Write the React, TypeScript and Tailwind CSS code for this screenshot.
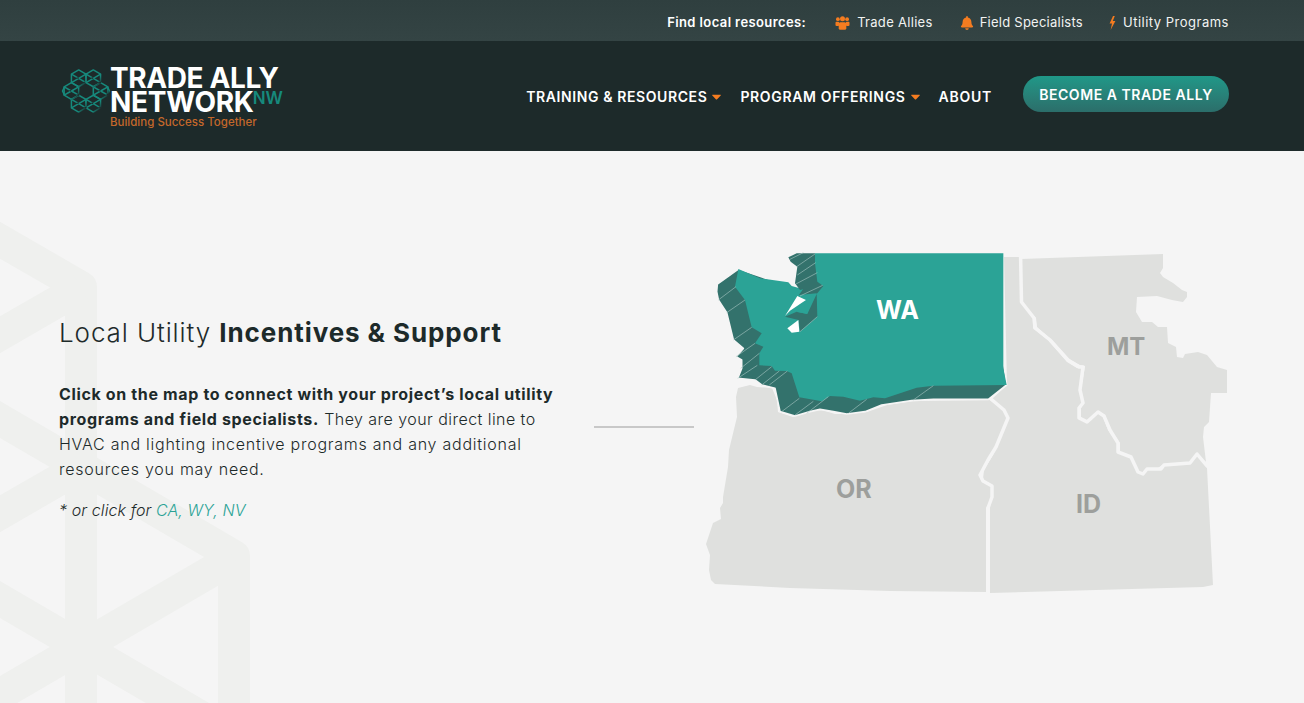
import React from 'react';
import { FaBell, FaCaretDown } from 'react-icons/fa';

const hexPoints = (cx: number, cy: number, r: number) =>
  [30, 90, 150, 210, 270, 330].map((a) => [
    cx + r * Math.cos((a * Math.PI) / 180),
    cy + r * Math.sin((a * Math.PI) / 180),
  ]);

function LogoMark() {
  const cells = [0, 60, 120, 180, 240, 300].map((a) => [
    24 + 14.6 * Math.cos((a * Math.PI) / 180),
    24 + 14.6 * Math.sin((a * Math.PI) / 180),
  ]);
  return (
    <svg width="50" height="48" viewBox="0 0 48 48" className="shrink-0">
      <defs>
        <linearGradient id="logoFade" x1="0.3" y1="0.2" x2="1" y2="0.85">
          <stop offset="0" stopColor="#16897c" />
          <stop offset="0.65" stopColor="#16897c" />
          <stop offset="1" stopColor="#1d2a2a" />
        </linearGradient>
      </defs>
      <g fill="none" stroke="url(#logoFade)" strokeWidth="1.5" strokeLinejoin="round">
        {cells.map(([cx, cy], i) => {
          const pts = hexPoints(cx, cy, 8.4);
          return (
            <g key={i}>
              <polygon points={pts.map((p) => p.join(',')).join(' ')} />
              {pts.map((p, j) => (
                <line key={j} x1={cx} y1={cy} x2={p[0]} y2={p[1]} />
              ))}
            </g>
          );
        })}
        <path d="M2.5 19.8 L0.5 24 L2.5 28.2 M45.5 19.8 L47.5 24 L45.5 28.2" />
      </g>
    </svg>
  );
}

function Logo() {
  return (
    <div className="flex items-start">
      <div className="mt-[1px] -mr-[1px]">
        <LogoMark />
      </div>
      <div className="flex flex-col">
        <div className="text-[28px] leading-[24px] font-bold tracking-[-0.4px] text-white whitespace-nowrap">TRADE ALLY</div>
        <div className="flex items-start">
          <span className="text-[28px] leading-[24px] font-bold tracking-[-0.25px] text-white">NETWORK</span>
          <span className="text-[17px] leading-[14px] font-semibold text-[#16897c] mt-[1px] -ml-[1px] tracking-[-0.2px]">NW</span>
        </div>
        <div className="text-[11.5px] leading-[14px] mt-[1px] font-medium text-[#c4682a] whitespace-nowrap">Building Success Together</div>
      </div>
    </div>
  );
}

function UsersIcon() {
  return (
    <svg width="15" height="14" viewBox="0 0 14 14" fill="#f57c20" className="mr-[7px] shrink-0">
      <circle cx="2.4" cy="3.2" r="1.9" />
      <circle cx="11.6" cy="3.2" r="1.9" />
      <circle cx="7" cy="2.8" r="2.5" />
      <rect x="0" y="5.8" width="3.6" height="4.2" rx="1" />
      <rect x="10.4" y="5.8" width="3.6" height="4.2" rx="1" />
      <rect x="3.2" y="6.2" width="7.6" height="7.6" rx="1.6" />
    </svg>
  );
}

function BoltIcon() {
  return (
    <svg width="7" height="14" viewBox="0 0 7 14" fill="#f57c20" className="mr-[7px] shrink-0">
      <polygon points="4,0 0.6,7.6 3,7.6 1.6,14 6.4,5 3.8,5 5.8,0" />
    </svg>
  );
}

function TopBar() {
  return (
    <div className="h-[41px] pt-[4px] bg-gradient-to-b from-[#2f3f3f] to-[#344444] flex items-center justify-end pr-[75px] text-[13px] text-[#f1f3f2]">
      <span className="font-semibold text-white tracking-[0.4px] mr-[29px]">Find local resources:</span>
      <UsersIcon />
      <span className="tracking-[0.3px] mr-[27px]">Trade Allies</span>
      <FaBell className="text-[#f57c20] text-[14px] mr-[6px]" />
      <span className="tracking-[0.25px] mr-[26px]">Field Specialists</span>
      <BoltIcon />
      <span className="tracking-[0.5px]">Utility Programs</span>
    </div>
  );
}

function NavBar() {
  return (
    <nav className="h-[110px] bg-[#1d2a2a] flex items-start justify-between pl-[61px] pr-[75px]">
      <div className="pt-[25px]">
        <Logo />
      </div>
      <div className="flex items-center pt-[35px] text-[14px] font-semibold text-white">
        <span className="tracking-[0.6px] mt-[4px]">TRAINING &amp; RESOURCES</span>
        <FaCaretDown className="text-[#f57c20] text-[15px] mt-[4px] ml-[2px] mr-[16px]" />
        <span className="tracking-[0.65px] mt-[4px]">PROGRAM OFFERINGS</span>
        <FaCaretDown className="text-[#f57c20] text-[15px] mt-[4px] ml-[2px] mr-[16px]" />
        <span className="tracking-[0.75px] mt-[4px]">ABOUT</span>
        <button className="ml-[31px] h-[36px] w-[206px] rounded-[18px] bg-gradient-to-b from-[#1f9888] to-[#2b6e6a] text-white text-[14px] font-semibold tracking-[0.55px] text-center">
          BECOME A TRADE ALLY
        </button>
      </div>
    </nav>
  );
}

function HexBackdrop() {
  return (
    <svg className="absolute left-0 top-0 pointer-events-none" width="260" height="552" viewBox="0 151 260 552">
      <g fill="none" stroke="#eff0ee" strokeWidth="32" strokeLinejoin="round">
        <path d="M-30 223 L81 287 L81 703" />
        <path d="M81 288 L-30 352" />
        <path d="M-30 402 L234 556 L234 703" />
        <path d="M81 467 L-30 531" />
        <path d="M-30 582 L234 736" />
        <path d="M234 558 L-30 712" />
      </g>
    </svg>
  );
}

const OR_POINTS =
  '738,388 750,385 757,387 772,388 777,400 778,412 793,417 810,411 822,410 835,414 847,414 867,412 887,405 913,401 990,400 1003,410 1007,418 995,447 987,460 979,475 982,482 992,486 992,497 986,508 986,592 890,591 790,588 715,584 711,580 709,570 710,555 706,544 713,523 721,519 720,508 723,503 723,497 728,467 729,450 737,417 736,397';
const ID_POINTS =
  '1004,257 1020,257 1021,302 1033,318 1033,328 1048,340 1067,362 1077,368 1083,366 1079,390 1082,403 1078,408 1078,418 1087,423 1098,413 1103,417 1108,430 1117,443 1117,452 1130,457 1137,472 1143,475 1147,470 1160,470 1163,466 1190,463 1197,455 1207,468 1213,585 1203,587 990,593 990,507 993,488 983,479 984,470 993,455 1000,440 1009,418 1005,410 992,399 1007,385';
const MT_POINTS =
  '1021,259 1163,254 1163,268 1160,273 1163,277 1173,283 1182,290 1187,292 1187,297 1183,302 1172,300 1157,296 1137,297 1136,312 1142,322 1152,322 1158,327 1167,327 1168,343 1176,347 1177,357 1183,358 1185,354 1198,352 1207,355 1217,367 1227,370 1227,393 1211,393 1209,422 1204,427 1203,437 1206,462 1197,453 1190,462 1162,465 1158,468 1147,468 1143,472 1139,472 1132,457 1120,452 1120,443 1111,430 1105,415 1098,411 1087,420 1081,417 1081,408 1084,403 1081,390 1085,366 1080,365 1069,359 1052,340 1037,327 1036,318 1021,302';
const MT_ID_BORDER =
  '1020.5,252 1021.5,302 1034,318 1035,328 1050,340 1068,360 1079,367 1083,367 1080,390 1083,403 1079,408 1079,418 1087,422 1098,412 1104,416 1110,430 1118,443 1118,452 1131,457 1138,472 1143,474 1147,469 1161,469 1164,465 1190,463 1197,454 1207,466';
const OR_ID_BORDER =
  '991,399 1004,410 1008,418 996,447 988,460 980,475 983,481 992,486 992,497 988,508 988,596';

// WA is traced in the coordinates of a 3x crop, hence the scale on its group
const WA_SIDE =
  '115,87 52,132 50,155 55,180 80,218 100,300 130,325 108,350 125,360 125,385 113,415 165,420 185,435 225,445 240,515 285,528 330,515 360,508 400,515 440,522 495,515 545,495 635,482 700,478 865,478 920,435 900,300 370,138 352,125 345,40 290,40 265,52 272,65 292,80 285,130 300,150';
const WA_TOP =
  '115,87 180,115 265,127 275,138 310,148 297,165 345,130 345,40 910,40 910,385 920,435 700,437 650,443 555,475 520,472 480,482 430,470 390,468 365,484 298,472 275,400 260,393 225,392 215,378 178,376 178,340 190,320 165,310 185,280 155,262 135,180 105,140';
const WA_STRIP =
  '345,40 290,40 265,52 272,65 292,80 285,130 300,150 310,148 297,165 350,160 352,230 300,275 296,240 255,230 290,215 322,222 350,162 370,138 352,125 345,70';
const WA_HATCH = [
  [55, 180, 108, 140],
  [80, 218, 135, 180],
  [100, 300, 155, 262],
  [108, 350, 165, 310],
  [122, 385, 178, 340],
  [113, 415, 172, 376],
  [165, 420, 215, 380],
  [185, 435, 238, 393],
  [208, 435, 262, 393],
  [245, 515, 298, 475],
  [285, 525, 340, 484],
  [320, 520, 385, 470],
  [445, 520, 500, 478],
  [640, 480, 700, 437],
  [270, 58, 310, 38],
  [290, 80, 345, 42],
  [292, 105, 347, 68],
  [288, 132, 352, 98],
  [300, 168, 368, 136],
  [300, 275, 352, 230],
];

function StateMap() {
  return (
    <svg width="530" height="346" viewBox="700 250 530 346" className="shrink-0 ml-[6px]">
      <polygon points={OR_POINTS} fill="#dfe0de" />
      <polygon points={ID_POINTS} fill="#dfe0de" />
      <polygon points={MT_POINTS} fill="#dfe0de" />
      <g fill="none" stroke="#f5f5f5" strokeWidth="3.5" strokeLinejoin="round" strokeLinecap="round">
        <polyline points={MT_ID_BORDER} />
        <polyline points={OR_ID_BORDER} />
      </g>
      <g transform="translate(700 240) scale(0.33333)">
        <polygon points={WA_SIDE} fill="#33726c" stroke="#f5f5f5" strokeWidth="5" strokeLinejoin="round" />
        <polygon points={WA_TOP} fill="#2ba396" />
        <polygon points={WA_STRIP} fill="#33726c" />
        <polygon points="255,228 292,168 318,180 300,192 270,212" fill="#ffffff" />
        <polygon points="262,265 295,240 298,275 275,278" fill="#ffffff" />
        <polygon points="300,195 310,190 322,222 292,216" fill="#2ba396" />
        <g stroke="#a9c8c4" strokeWidth="1.8">
          {WA_HATCH.map(([x1, y1, x2, y2], i) => (
            <line key={i} x1={x1} y1={y1} x2={x2} y2={y2} />
          ))}
        </g>
      </g>
      <g fontFamily="Inter, sans-serif" fontWeight="700" fontSize="25">
        <text x="876" y="319" fill="#ffffff">WA</text>
        <text x="1107" y="355" fontSize="24" fill="#9d9f9c">MT</text>
        <text x="836" y="498" fill="#9d9f9c">OR</text>
        <text x="1076" y="513" fill="#9d9f9c">ID</text>
      </g>
    </svg>
  );
}

export default function App() {
  return (
    <div className="h-[703px] overflow-hidden bg-[#f5f5f5] [font-family:Inter,sans-serif] text-[#1d2a2a]">
      <TopBar />
      <NavBar />
      <main className="relative h-[552px]">
        <HexBackdrop />
        <div className="relative flex items-start pl-[59px] pt-[99px]">
          <div className="w-[535px] shrink-0 pt-[65px]">
            <h1 className="text-[26px] leading-[36px] font-light tracking-[0.9px] whitespace-nowrap">
              Local Utility <strong className="font-bold">Incentives &amp; Support</strong>
            </h1>
            <p className="mt-[31px] w-[510px] text-[16px] leading-[25px] font-light tracking-[0.75px]">
              <strong className="font-bold tracking-[0.64px]">Click on the map to connect with your project’s local utility programs and field specialists.</strong>{' '}
              <span className="tracking-[0.45px]">They are your direct line to</span> HVAC and lighting incentive programs and any additional resources you may need.
            </p>
            <p className="mt-[16px] text-[16px] leading-[25px] font-light italic tracking-[0.1px]">
              * or click for <a href="#" className="text-[#2ba396]">CA, WY, NV</a>
            </p>
          </div>
          <div className="w-[100px] h-[2px] bg-[#c8c8c8] mt-[176px] shrink-0" />
          <StateMap />
        </div>
      </main>
    </div>
  );
}
